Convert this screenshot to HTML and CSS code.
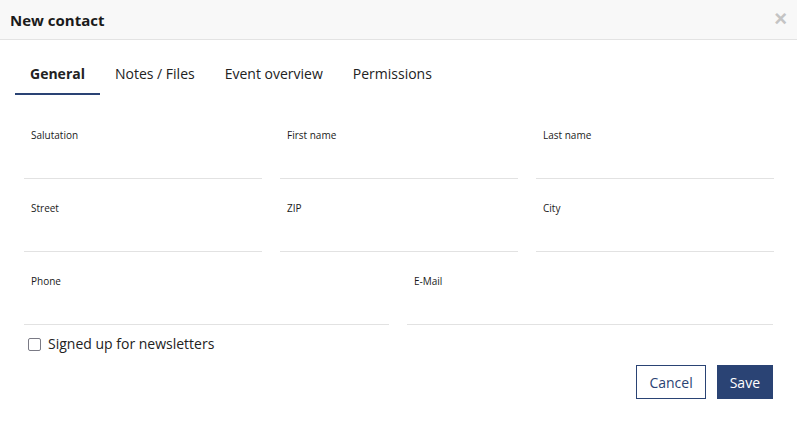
FILE: index.html
```html
<!DOCTYPE html>
<html lang="en">
<head>
  <meta charset="UTF-8" />
  <title>New contact</title>
  <link rel="stylesheet" href="styles.css">
</head>
<body>
  <div class="dialog">
    <header class="dialog-header">
      <h1>New contact</h1>
      <span class="close">&times;</span>
    </header>

    <nav class="tabs">
      <a class="tab active">General</a>
      <a class="tab">Notes / Files</a>
      <a class="tab">Event overview</a>
      <a class="tab">Permissions</a>
    </nav>

    <form class="form">
      <div class="row three">
        <div class="field"><label>Salutation</label><input type="text"></div>
        <div class="field"><label>First name</label><input type="text"></div>
        <div class="field"><label>Last name</label><input type="text"></div>
      </div>
      <div class="row three">
        <div class="field"><label>Street</label><input type="text"></div>
        <div class="field"><label>ZIP</label><input type="text"></div>
        <div class="field"><label>City</label><input type="text"></div>
      </div>
      <div class="row two">
        <div class="field"><label>Phone</label><input type="text"></div>
        <div class="field"><label>E-Mail</label><input type="text"></div>
      </div>

      <label class="check">
        <span class="box"></span>
        Signed up for newsletters
      </label>

      <div class="actions">
        <button type="button" class="btn btn-outline">Cancel</button>
        <button type="button" class="btn btn-primary">Save</button>
      </div>
    </form>
  </div>
</body>
</html>
```

FILE: styles.css
```css
body {
  margin: 0;
  font-family: "Open Sans", Arial, sans-serif;
  background: #fff;
  color: #222;
}

.dialog {
  width: 797px;
}

.dialog-header {
  display: flex;
  justify-content: space-between;
  align-items: center;
  height: 39px;
  padding: 0 10px;
  background: #f8f8f8;
  border-bottom: 1px solid #e3e3e3;
}

.dialog-header h1 {
  margin: 0;
  font-size: 15px;
  font-weight: 700;
  color: #1a1a1a;
}

.close {
  font-size: 22px;
  line-height: 20px;
  font-weight: 700;
  color: #c4c4c4;
  font-family: Arial, sans-serif;
  margin-top: -1px;
}

.tabs {
  display: flex;
  margin: 14px 0 0 15px;
}

.tab {
  padding: 10px 15px 9px;
  font-size: 14px;
  line-height: 20px;
  color: #222;
  border-bottom: 2px solid transparent;
}

.tab.active {
  font-weight: 700;
  border-bottom-color: #2a4374;
}

.form {
  padding: 32px 23px 0 24px;
}

.row {
  display: grid;
  gap: 18px;
  margin-bottom: 21px;
}

.row.three {
  grid-template-columns: 238px 238px 238px;
}

.row.two {
  grid-template-columns: 365px 366px;
}

.field label {
  display: block;
  padding-left: 7px;
  font-size: 10px;
  line-height: 16px;
  color: #1a1a1a;
}

.field input {
  display: block;
  width: 100%;
  box-sizing: border-box;
  height: 36px;
  border: none;
  border-bottom: 1px solid #e2e2e2;
  outline: none;
  background: transparent;
}

.check {
  display: flex;
  align-items: center;
  gap: 7px;
  margin: -12px 0 0 4px;
  font-size: 14px;
  line-height: 20px;
  color: #222;
}

.box {
  width: 11px;
  height: 11px;
  border: 1px solid #7a7a85;
  border-radius: 2px;
}

.actions {
  display: flex;
  justify-content: flex-end;
  gap: 11px;
  margin-top: 11px;
  padding-right: 1px;
}

.btn {
  height: 34px;
  padding: 0 12px;
  font-family: "Open Sans", Arial, sans-serif;
  font-size: 14px;
  border-radius: 0;
  cursor: pointer;
}

.btn-outline {
  background: #fff;
  color: #2a4374;
  border: 1px solid #2a4374;
}

.btn-primary {
  background: #2a4374;
  color: #fff;
  border: 1px solid #2a4374;
}
```
